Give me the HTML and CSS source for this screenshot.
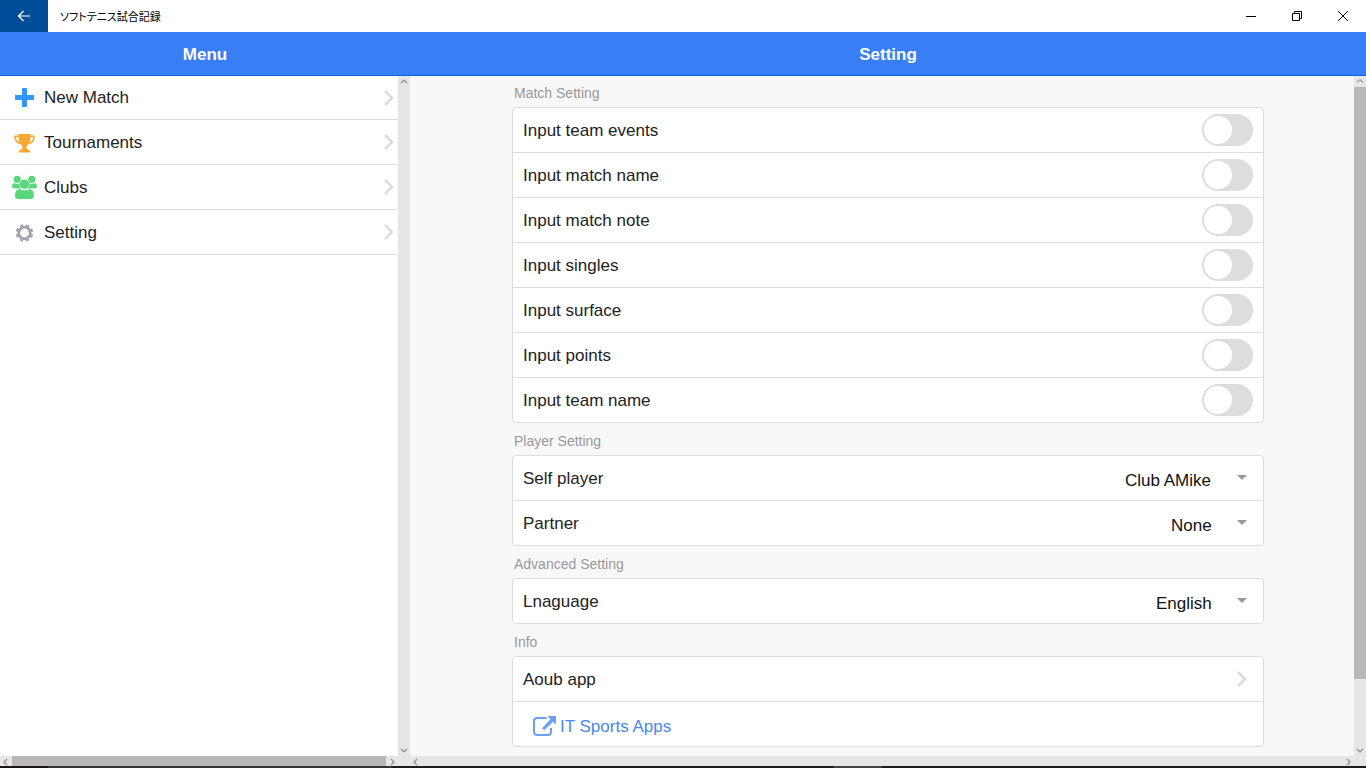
FILE: index.html
```html
<!DOCTYPE html>
<html lang="en">
<head>
<meta charset="utf-8">
<title>ソフトテニス試合記録</title>
<meta name="viewport" content="width=device-width, initial-scale=1">
<link rel="stylesheet" href="styles.css">
</head>
<body>
<svg class="defs" aria-hidden="true">
  <symbol id="chevron" viewBox="0 0 10 16"><path d="M1 1l7 7-7 7" fill="none" stroke="currentColor" stroke-width="2.600"/></symbol>
  <symbol id="arrow" viewBox="0 0 12 12"><path d="M3 7 6 4l3 3" fill="none" stroke="currentColor" stroke-width="1.200"/></symbol>
</svg>

<div class="titlebar">
  <button class="back" type="button" aria-label="Back">
    <svg width="14" height="12" viewBox="0 0 14 12"><path d="M13 6H1.500M6.500 1l-5 5 5 5" fill="none" stroke="currentColor" stroke-width="1.200"/></svg>
  </button>
  <span class="apptitle" lang="ja">ソフトテニス試合記録</span>
  <button class="win" type="button" aria-label="Minimize">
    <svg width="12" height="12" viewBox="0 0 12 12"><path d="M1 6.500h10" stroke="currentColor"/></svg>
  </button>
  <button class="win" type="button" aria-label="Restore">
    <svg width="12" height="12" viewBox="0 0 12 12"><path d="M1.500 3.500h7v7h-7zM3.500 3.500v-2h7v7h-2" fill="none" stroke="currentColor"/></svg>
  </button>
  <button class="win" type="button" aria-label="Close">
    <svg width="12" height="12" viewBox="0 0 12 12"><path d="M1 1l10 10M11 1 1 11" stroke="currentColor"/></svg>
  </button>
</div>

<div class="app">
  <aside class="pane">
    <header class="bar"><h1 class="heading">Menu</h1></header>
    <div class="view">
      <nav class="menu">
        <a class="menu-item" href="#match">
          <svg class="icon plus" width="25" height="25" viewBox="0 0 25 25"><path d="M10.500 3h4q.5 0 .5.500V10h6.500q.5 0 .5.500v4q0 .5-.5.500H15v6.500q0 .5-.5.500h-4q-.5 0-.5-.5V15H3.500q-.5 0-.5-.5v-4q0-.5.500-.5H10V3.500q0-.5.500-.5z" fill="currentColor"/></svg>
          <span class="menu-text">New Match</span>
          <svg class="chevron" width="10" height="16"><use href="#chevron"/></svg>
        </a>
        <a class="menu-item" href="#tournaments">
          <svg class="icon trophy" width="25" height="25" viewBox="0 0 25 25"><path d="M6.500 4h12v1.500H23q0 7.500-7 9-1.500 1-1.500 3 0 1.500 2.500 2.500 1.500.6 1.500 2.500h-12q0-1.900 1.500-2.500 2.500-1 2.500-2.500 0-2-1.500-3-7-1.500-7-9h4.500zM3.800 7.300q.5 3.800 3.900 5-1-2.300-1.100-5zm17.400 0h-2.800q-.1 2.700-1.100 5 3.400-1.200 3.900-5z" fill="currentColor" fill-rule="evenodd"/></svg>
          <span class="menu-text">Tournaments</span>
          <svg class="chevron" width="10" height="16"><use href="#chevron"/></svg>
        </a>
        <a class="menu-item" href="#clubs">
          <svg class="icon clubs" width="25" height="25" viewBox="0 0 25 25"><g fill="currentColor"><circle cx="5.200" cy="4.300" r="3.600"/><circle cx="19.800" cy="4.300" r="3.600"/><path d="M2 8q3 2 5.500 0-.5 3.700 1.800 5.500H3q-3 0-3-2.500 0-2.500 2-3zM23 8q-3 2-5.500 0 .5 3.700-1.800 5.500H22q3 0 3-2.500 0-2.500-2-3z"/><circle cx="12.500" cy="9.300" r="4.700"/><path d="M7.300 14q5.200 2.500 10.400 0 4.300.8 4.300 6.500 0 3.500-3.500 3.500h-12Q3 24 3 20.500 3 14.800 7.300 14z"/></g></svg>
          <span class="menu-text">Clubs</span>
          <svg class="chevron" width="10" height="16"><use href="#chevron"/></svg>
        </a>
        <a class="menu-item" href="#setting">
          <svg class="icon gear" width="25" height="25" viewBox="0 0 25 25"><circle cx="12.500" cy="13" r="5.800" fill="none" stroke="currentColor" stroke-width="2.800"/><circle cx="12.500" cy="13" r="7.700" fill="none" stroke="currentColor" stroke-width="2.200" stroke-dasharray="3.200 2.848" transform="rotate(10.600 12.500 13)"/></svg>
          <span class="menu-text">Setting</span>
          <svg class="chevron" width="10" height="16"><use href="#chevron"/></svg>
        </a>
      </nav>
      <div class="vscroll" aria-hidden="true">
        <svg class="up" width="12" height="12"><use href="#arrow"/></svg>
        <svg class="down" width="12" height="12"><use href="#arrow"/></svg>
      </div>
    </div>
    <div class="hscroll" aria-hidden="true">
      <svg class="left" width="12" height="12"><use href="#arrow"/></svg>
      <span class="thumb"></span>
      <svg class="right" width="12" height="12"><use href="#arrow"/></svg>
    </div>
  </aside>

  <main class="pane">
    <header class="bar"><h1 class="heading">Setting</h1></header>
    <div class="view">
      <form class="content">
        <section class="group">
          <h2 class="label">Match Setting</h2>
          <div class="card">
            <div class="row"><label class="name" for="events">Input team events</label><input class="toggle" type="checkbox" id="events"></div>
            <div class="row"><label class="name" for="mname">Input match name</label><input class="toggle" type="checkbox" id="mname"></div>
            <div class="row"><label class="name" for="note">Input match note</label><input class="toggle" type="checkbox" id="note"></div>
            <div class="row"><label class="name" for="singles">Input singles</label><input class="toggle" type="checkbox" id="singles"></div>
            <div class="row"><label class="name" for="surface">Input surface</label><input class="toggle" type="checkbox" id="surface"></div>
            <div class="row"><label class="name" for="points">Input points</label><input class="toggle" type="checkbox" id="points"></div>
            <div class="row"><label class="name" for="tname">Input team name</label><input class="toggle" type="checkbox" id="tname"></div>
          </div>
        </section>
        <section class="group">
          <h2 class="label">Player Setting</h2>
          <div class="card">
            <div class="row"><label class="name" for="self">Self player</label><span class="picker"><select class="select" id="self"><option>Club AMike</option></select></span></div>
            <div class="row"><label class="name" for="partner">Partner</label><span class="picker"><select class="select" id="partner"><option>None</option></select></span></div>
          </div>
        </section>
        <section class="group">
          <h2 class="label">Advanced Setting</h2>
          <div class="card">
            <div class="row"><label class="name" for="lang">Lnaguage</label><span class="picker"><select class="select" id="lang"><option>English</option></select></span></div>
          </div>
        </section>
        <section class="group">
          <h2 class="label">Info</h2>
          <div class="card">
            <a class="row about" href="#about"><span class="name">Aoub app</span><svg class="chevron" width="10" height="16"><use href="#chevron"/></svg></a>
            <div class="row"><a class="link" href="#apps"><svg width="24" height="20" viewBox="0 0 24 20"><path d="M13.500 2H4.500Q1 2 1 5v10.500Q1 19 4.500 19h10q3.500 0 3.500-3.500V12" fill="none" stroke="currentColor" stroke-width="2"/><path d="M14.500 0H23v8.500l-2.800-2.700-9 8.500L9 12.200l8.500-9z" fill="currentColor"/></svg><span class="name">IT Sports Apps</span></a></div>
          </div>
        </section>
      </form>
      <div class="vscroll" aria-hidden="true">
        <svg class="up" width="12" height="11"><use href="#arrow"/></svg>
        <span class="thumb"></span>
        <svg class="down" width="12" height="12"><use href="#arrow"/></svg>
      </div>
    </div>
    <div class="hscroll" aria-hidden="true">
      <svg class="left" width="12" height="12"><use href="#arrow"/></svg>
      <svg class="right" width="12" height="12"><use href="#arrow"/></svg>
    </div>
  </main>
</div>
<div class="strip"></div>
</body>
</html>
```
FILE: styles.css
```css
* { box-sizing: border-box; }

body {
  margin: 0;
  height: 100vh;
  display: flex;
  flex-direction: column;
  overflow: hidden;
  background: #fff;
  color: #222;
  font: 17px/20px "Liberation Sans", Arial, sans-serif;
}

a { color: inherit; text-decoration: none; }
svg { display: block; flex: none; }
button { border: 0; padding: 0; background: none; color: #000; }
.defs { display: none; }

.titlebar { display: flex; align-items: center; height: 32px; flex: none; }
.back, .win { display: grid; place-items: center; height: 32px; }
.back { width: 48px; background: #004e98; color: #fff; }
.win { width: 46px; }
.apptitle {
  flex: 1;
  padding-left: 12px;
  color: #000;
  font: 11px/16px "Noto Sans CJK JP", sans-serif;
  font-feature-settings: "palt";
}

.app { flex: 1; min-height: 0; display: grid; grid-template-columns: 410px 1fr; }
.pane { display: flex; flex-direction: column; min-width: 0; min-height: 0; }
.bar {
  flex: none;
  height: 44px;
  display: grid;
  place-items: center;
  background: #387ef5;
  border-bottom: 1px solid #0c60ee;
  color: #fff;
}
.heading { margin: 0; padding-top: 2px; font-size: 17px; line-height: 20px; }
.view { flex: 1; min-height: 0; display: flex; }

.menu { flex: 1; }
.menu-item {
  display: flex;
  align-items: center;
  height: 45px;
  padding: 0 4px 0 12px;
  border-bottom: 1px solid #ddd;
}
.menu-text { flex: 1; padding: 2px 0 0 7px; }
.menu-item:first-child { height: 44px; }
.menu-item:first-child .menu-text { padding-top: 0; }
.chevron { color: #dcdcdc; }
.plus { color: #3396ff; }
.trophy { color: #ffa733; }
.clubs { color: #5ad67f; }
.gear { color: #a2a4ab; }

.content { flex: 1; min-width: 0; padding: 0 90px 0 102px; background: #f8f8f8; }
.label {
  margin: 0;
  height: 32px;
  padding: 8px 2px 0;
  color: #999;
  font-size: 14px;
  font-weight: 400;
  line-height: 20px;
}
.group:first-child .label { height: 31px; padding-top: 7px; }
.card { background: #fff; border: 1px solid #ddd; border-radius: 4px; }
.row {
  display: flex;
  align-items: center;
  justify-content: space-between;
  height: 45px;
  padding: 0 10px;
  border-bottom: 1px solid #ddd;
}
.row:last-child { border-bottom-color: transparent; margin-bottom: -1px; }
.name { padding-top: 2px; }

.toggle {
  appearance: none;
  width: 51px;
  height: 32px;
  margin: 0;
  padding: 2px;
  border-radius: 16px;
  background: #ddd;
}
.toggle::before {
  content: "";
  display: block;
  width: 28px;
  height: 28px;
  border-radius: 50%;
  background: #fff;
}
.toggle:checked { background: #387ef5; }
.toggle:checked::before { margin-left: auto; }

.picker { display: grid; align-items: center; justify-items: end; }
.picker::after {
  content: "";
  grid-area: 1 / 1;
  margin: 0 6px 2px 0;
  border: 5px solid transparent;
  border-top-color: #999;
  border-bottom: 0;
  pointer-events: none;
}
.select {
  grid-area: 1 / 1;
  appearance: none;
  margin: 0;
  padding: 5px 41px 0 0;
  border: 0;
  background: none;
  color: #111;
  font: inherit;
}
.about { padding-right: 16px; }
.link { display: flex; align-items: center; gap: 3px; padding: 4px 0 0 10px; color: #4a87ee; }
.link svg { color: #6b9ff3; }

.vscroll, .hscroll { flex: none; display: flex; justify-content: space-between; background: #e6e6e6; color: #8c8c8c; }
.vscroll { width: 12px; flex-direction: column; }
.hscroll { height: 10px; padding-right: 12px; }
.thumb { background: #b8b8b8; }
.vscroll .thumb { height: 87%; margin-bottom: auto; }
.hscroll .thumb { flex: 1; }
.down { transform: rotate(180deg); }
.left { transform: rotate(-90deg); }
.right { transform: rotate(90deg); }

.strip { flex: none; height: 2px; background: linear-gradient(90deg, #1a1618 48px, #333 48px 392px, #1f1c1f 392px 834px, #444 834px 882px, #1f1c1f 882px); }
```
